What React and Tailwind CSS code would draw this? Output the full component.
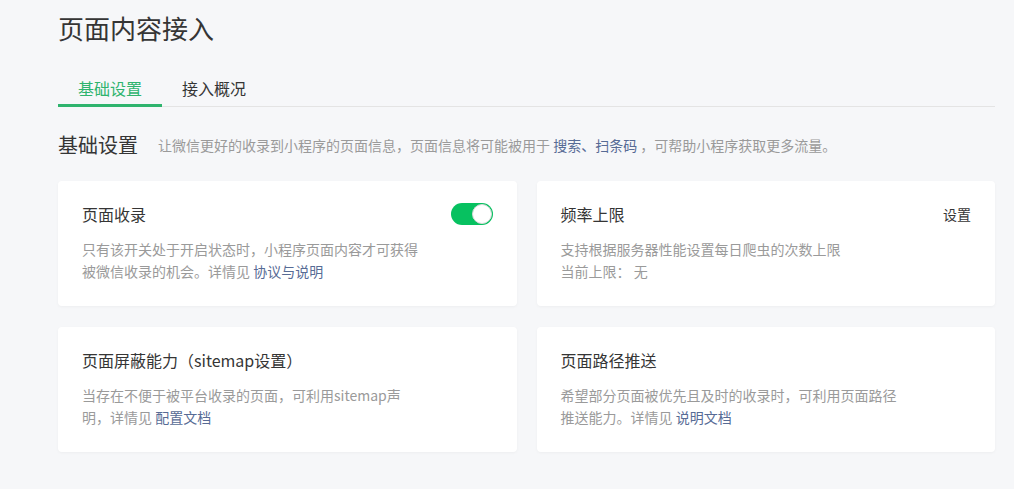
import React, { useState } from 'react';

const FONT = "font-['Noto_Sans_CJK_SC','Noto_Sans',sans-serif]";

const Link = ({ children }) => (
    <a href="#" className="text-[#576b95]">{children}</a>
);

const Toggle = ({ on, onChange }) => (
    <button
        onClick={() => onChange(!on)}
        className={`relative h-[22px] w-[42px] rounded-full ${on ? 'bg-[#07c160]' : 'bg-[#dcdcdc]'}`}
    >
        <span
            className={`absolute top-px h-5 w-5 rounded-full border border-[#d9d9d9] bg-white ${on ? 'right-px' : 'left-px'}`}
        />
    </button>
);

const Card = ({ title, action, children }) => (
    <div className="rounded-[4px] bg-white px-6 pt-[21px] pb-6 shadow-[0_1px_3px_rgba(0,0,0,0.04)]">
        <div className="flex h-6 items-center justify-between">
            <h3 className="text-base leading-6 text-[#353535]">{title}</h3>
            {action}
        </div>
        <p className="mt-3 w-[340px] text-sm leading-[22px] text-[#9a9a9a]">{children}</p>
    </div>
);

const App = () => {
    const [tab, setTab] = useState(0);
    const [indexed, setIndexed] = useState(true);
    const tabs = ['基础设置', '接入概况'];

    return (
        <div className={`min-h-screen bg-[#f6f7f9] ${FONT}`}>
            <div className="ml-[58px] w-[937px] pt-[10px]">
                <h1 className="text-[26px] leading-9 text-[#353535]">页面内容接入</h1>

                <div className="mt-[30px] flex border-b border-[#e4e4e4]">
                    {tabs.map((t, i) => (
                        <button
                            key={t}
                            onClick={() => setTab(i)}
                            className={`-mb-px px-5 pb-1 text-base leading-6 ${
                                tab === i
                                    ? 'border-b-[3px] border-[#2fb46e] text-[#2fb46e]'
                                    : 'border-b-[3px] border-transparent text-[#353535]'
                            }`}
                        >
                            {t}
                        </button>
                    ))}
                </div>

                <div className="mt-6 flex items-center gap-5">
                    <h2 className="text-xl leading-7 text-[#353535]">基础设置</h2>
                    <p className="text-sm leading-7 text-[#9a9a9a]">
                        让微信更好的收录到小程序的页面信息，页面信息将可能被用于 <Link>搜索、扫条码</Link> ，可帮助小程序获取更多流量。
                    </p>
                </div>

                <div className="mt-[22px] grid grid-cols-2 gap-x-5 gap-y-[21px]">
                    <Card title="页面收录" action={<Toggle on={indexed} onChange={setIndexed} />}>
                        只有该开关处于开启状态时，小程序页面内容才可获得被微信收录的机会。详情见 <Link>协议与说明</Link>
                    </Card>
                    <Card
                        title="频率上限"
                        action={<a href="#" className="text-sm text-[#353535]">设置</a>}
                    >
                        支持根据服务器性能设置每日爬虫的次数上限
                        <br />
                        当前上限： 无
                    </Card>
                    <Card title="页面屏蔽能力（sitemap设置）">
                        当存在不便于被平台收录的页面，可利用sitemap声明，详情见 <Link>配置文档</Link>
                    </Card>
                    <Card title="页面路径推送">
                        希望部分页面被优先且及时的收录时，可利用页面路径推送能力。详情见 <Link>说明文档</Link>
                    </Card>
                </div>
            </div>
        </div>
    );
};

export default App;
